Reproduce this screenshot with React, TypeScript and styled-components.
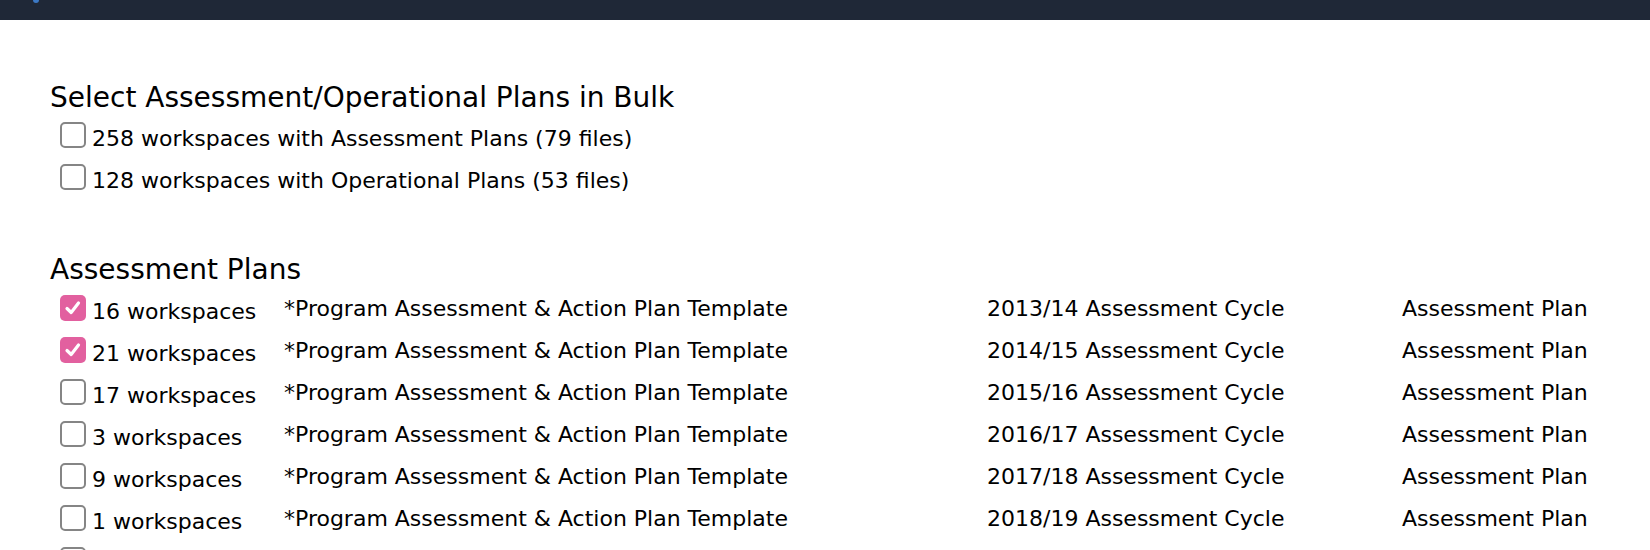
import React from "react";
import styled, { createGlobalStyle } from "styled-components";

const Global = createGlobalStyle`
  html, body { margin: 0; padding: 0; background: #ffffff; }
  body { font-family: "DejaVu Sans", Verdana, sans-serif; color: #000; }
`;

const TopBar = styled.header`
  height: 20px;
  background: #1f2837;
  position: relative;
`;

const Dot = styled.span`
  position: absolute;
  left: 33px;
  top: 0;
  width: 6px;
  height: 3px;
  border-radius: 0 0 3px 3px;
  background: #3c79c4;
`;

const Main = styled.main`
  padding: 61px 0 0 50px;
`;

const Heading = styled.h2<{ $mb?: number }>`
  margin: 0 0 ${(p) => p.$mb ?? 0}px 0;
  font-size: 28px;
  font-weight: normal;
  line-height: 34px;
`;

const Section = styled.section<{ $gap?: number }>`
  margin-bottom: ${(p) => p.$gap ?? 0}px;
`;

const BulkRow = styled.label`
  display: flex;
  align-items: center;
  gap: 6px;
  height: 42px;
  padding-left: 10px;
  font-size: 22px;
  white-space: nowrap;
`;

const Box = styled.span<{ $checked?: boolean }>`
  flex: none;
  width: 26px;
  height: 26px;
  box-sizing: border-box;
  border-radius: 5px;
  border: ${(p) => (p.$checked ? "none" : "2px solid #858585")};
  background: ${(p) => (p.$checked ? "#e2609f" : "#fff")};
  display: inline-flex;
  align-items: center;
  justify-content: center;
  margin-top: -6px;
`;

const Grid = styled.div`
  display: grid;
  grid-template-columns: 234px 703px 415px auto;
  font-size: 22px;
`;

const Cell = styled.div`
  height: 42px;
  display: flex;
  align-items: center;
  white-space: nowrap;
`;

const FirstCell = styled(Cell)`
  padding-left: 10px;
  gap: 6px;
  padding-top: 6px;
  box-sizing: border-box;
`;

const Check = () => (
  <svg width="20" height="20" viewBox="0 0 20 20">
    <path d="M4 10.5 L8.2 14.5 L15.5 5" fill="none" stroke="#fff" strokeWidth="3.2" strokeLinecap="round" strokeLinejoin="round" />
  </svg>
);

const CheckBox = ({ checked }: { checked?: boolean }) => (
  <Box $checked={checked}>{checked && <Check />}</Box>
);

const plans = [
  { n: 16, cycle: "2013/14", checked: true },
  { n: 21, cycle: "2014/15", checked: true },
  { n: 17, cycle: "2015/16", checked: false },
  { n: 3, cycle: "2016/17", checked: false },
  { n: 9, cycle: "2017/18", checked: false },
  { n: 1, cycle: "2018/19", checked: false },
  { n: 4, cycle: "2019/20", checked: false },
];

export default function App() {
  return (
    <>
      <Global />
      <TopBar>
        <Dot />
      </TopBar>
      <Main>
        <Section $gap={52}>
          <Heading $mb={2}>Select Assessment/Operational Plans in Bulk</Heading>
          <BulkRow>
            <CheckBox />
            258 workspaces with Assessment Plans (79 files)
          </BulkRow>
          <BulkRow>
            <CheckBox />
            128 workspaces with Operational Plans (53 files)
          </BulkRow>
        </Section>
        <Section>
          <Heading>Assessment Plans</Heading>
          <Grid>
            {plans.map((p) => (
              <React.Fragment key={p.cycle}>
                <FirstCell>
                  <CheckBox checked={p.checked} />
                  {p.n} workspaces
                </FirstCell>
                <Cell>*Program Assessment &amp; Action Plan Template</Cell>
                <Cell>{p.cycle} Assessment Cycle</Cell>
                <Cell>Assessment Plan</Cell>
              </React.Fragment>
            ))}
          </Grid>
        </Section>
      </Main>
    </>
  );
}
